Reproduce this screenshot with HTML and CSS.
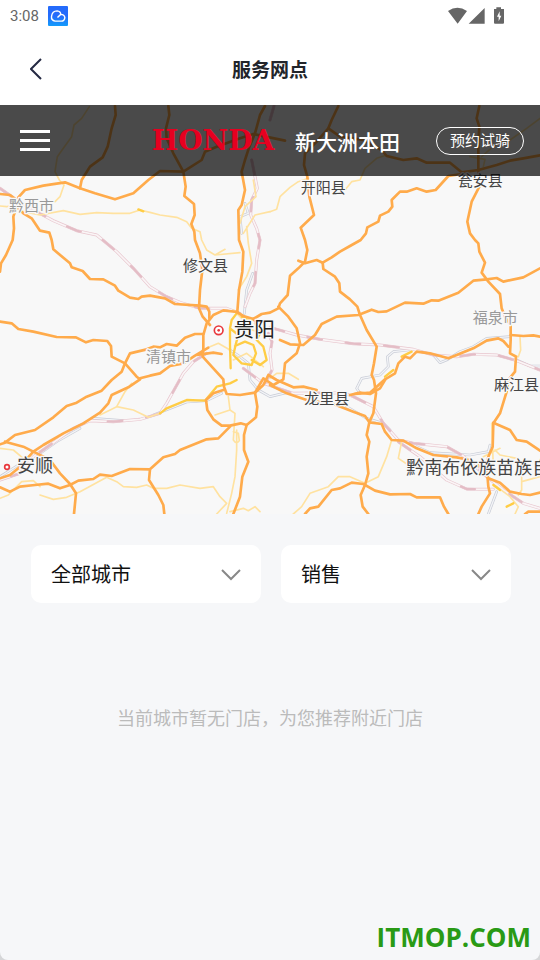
FILE: index.html
```html
<!DOCTYPE html>
<html lang="zh-CN">
<head>
<meta charset="utf-8">
<meta name="viewport" content="width=device-width, initial-scale=1">
<title>服务网点</title>
<link rel="stylesheet" href="styles.css">
</head>
<body>
<div class="status-bar">
  <span class="clock">3:08</span>
  <svg class="app-badge" viewBox="0 0 57 57" aria-hidden="true">
    <defs><linearGradient id="badge" x1="0" y1="0" x2="0" y2="1"><stop offset=".5" stop-color="#246bfb"/><stop offset="1" stop-color="#139cfb"/></linearGradient></defs>
    <rect width="57" height="57" rx="3" fill="url(#badge)"/>
    <path d="M27 33L36 24Q47 24 48 33Q47 43 38 43H20Q9 41 10 30Q12 14 26 14Q36 15 37 25" fill="none" stroke="#fff" stroke-width="4"/>
  </svg>
  <svg class="signals" viewBox="0 0 168 54" aria-hidden="true">
    <path d="M0 12Q28-8 57 12L29 50ZM62 50L110 3V50Z" fill="#666"/>
    <path d="M138 6H145V1H159V6H168V47Q168 50 165 50H141Q138 50 138 47Z" fill="#666"/>
    <path d="M155 13L147 29H152V43L160 26H155Z" fill="#fff"/>
  </svg>
</div>
<header class="title-bar">
  <button class="back" type="button" aria-label="返回">
    <svg viewBox="0 0 12 22" aria-hidden="true"><path d="M11 1L1 11L11 21" fill="none" stroke="#252a43" stroke-width="2"/></svg>
  </button>
  <h1>服务网点</h1>
</header>
<main>
  <section class="map-area">
    <svg class="map" viewBox="0 315 1620 1227" preserveAspectRatio="xMidYMid slice" role="img" aria-label="贵阳地图">
      <defs>
        <g id="rails">
          <path d="M0 565L50 600L100 630L160 662L230 692L290 705L350 755L400 805L450 860L500 890L540 907L600 925L680 925L720 940"/>
          <path d="M822 318L810 360M755 480L765 530L772 565L755 600L752 645L770 685L780 720L770 780L765 850L750 880L735 920"/>
          <path d="M810 982L890 1005L960 1018L1060 1031L1140 1035L1240 1048L1300 1065L1370 1070L1420 1063L1490 1065L1550 1082L1620 1110"/>
          <path d="M620 1060L580 1085L550 1120L500 1210L480 1240L420 1258L340 1265L270 1262L220 1285L150 1335L100 1370L60 1420L0 1440"/>
          <path d="M730 1105L790 1150L880 1180L1030 1178L1060 1190L1120 1220L1150 1270L1195 1320L1240 1330L1340 1340L1390 1368L1460 1430L1510 1470L1570 1510L1620 1525"/>
          <path d="M1195 1325L1260 1370L1340 1440L1400 1467L1480 1468"/>
          <path d="M805 1000L816 1025L810 1060L816 1110L795 1150"/>
        </g>
        <g id="rivers">
          <path d="M735 610L745 640L720 650L725 700M758 820L740 870L733 940"/>
          <path d="M690 1050L720 1070L745 1090L750 1140L775 1170L810 1190L860 1178"/>
          <path d="M1225 1050L1180 1055L1162 1070L1165 1100L1140 1125L1085 1135L1070 1165L1080 1180"/>
          <path d="M1300 1065L1320 1088L1340 1080L1380 1055L1420 1040L1460 1015L1530 1010M1550 1080L1590 1098L1620 1098"/>
          <path d="M0 1430L55 1395M120 1360L170 1325L240 1285M280 1255L370 1262M460 1245L560 1206L620 1202L665 1180"/>
          <path d="M1040 1220L1100 1255L1150 1270L1170 1290M1250 1340L1290 1358L1410 1365L1465 1355L1470 1335M1490 1475L1465 1542"/>
        </g>
      </defs>
      <rect y="315" width="1620" height="1227" fill="#f8f8f8"/>
      <use href="#rivers" class="river-edge"/><use href="#rivers" class="river-fill"/>
      <use href="#rails" class="rail-edge"/><use href="#rails" class="rail-fill"/><use href="#rails" class="rail-dash"/>
      <g class="minor">
        <path d="M268 320L245 355L222 375L215 410L190 445L172 470L165 515L178 540L192 555L180 590L165 605M0 618L20 620L50 610M70 635L120 645L190 632L240 643L290 638L340 640L390 640L420 630L450 637L480 645L530 652L560 665L575 685L600 695L605 720L620 750L645 765L720 758M645 765L675 748"/>
        <path d="M810 635L765 645L730 700M760 540L768 590L735 620L720 670M740 680L745 730L755 790L740 830L715 870"/>
        <path d="M810 635L830 628L840 590L870 562L895 545L925 535M1035 570L1055 545L1080 540L1095 505L1130 475L1160 465M1620 355L1580 385L1530 420L1490 430L1445 470M1410 470L1455 478L1450 500"/>
        <path d="M0 1345L40 1350L70 1375M0 1495L25 1485L65 1445L100 1442L120 1460M120 1485L160 1498L200 1492L240 1475L320 1432L350 1445L370 1460L410 1462L440 1455L460 1465L500 1465L540 1455L600 1465L640 1460L660 1490L680 1510L650 1542"/>
        <path d="M300 1245L350 1220L400 1230L445 1252L480 1240M350 1220L375 1175L395 1150M685 1190L690 1230L645 1245M690 1230L705 1240L700 1320Q710 1335 718 1322L715 1300L700 1295M710 1290L710 1350L705 1430L695 1480L680 1540M690 1535L730 1525L745 1532L765 1520L780 1535"/>
        <path d="M810 1135L830 1120L865 1120L895 1138M1560 1010L1562 1050L1555 1070L1530 1060M1175 1320L1160 1370L1135 1430L1095 1450L1050 1430L1015 1430L985 1460L930 1480L905 1520L880 1542M1205 1325L1195 1375L1225 1395"/>
        <path d="M1485 1350L1500 1365L1550 1375L1565 1400L1565 1470L1555 1485M1565 1445L1620 1430M1475 1270L1480 1400M1490 1460L1530 1490L1555 1520L1545 1542M1450 1370L1500 1345"/>
        <path d="M700 930L725 955L740 985L790 1000M630 1040L655 1030L690 1050M700 1080L740 1060L790 1100"/>
      </g>
      <g class="gold">
        <path d="M710 940L695 960L690 985L690 1035L692 1105M690 985L715 1005L708 1030L700 1065L725 1090L755 1095L768 1060L760 1035L735 1025L705 1038M765 970L780 1000L770 1020L790 1040L800 1080L780 1095L755 1080M725 950L745 960L765 955"/>
        <path d="M480 1240L500 1225L560 1200L615 1202L650 1160L690 1150L710 1140M1155 1130L1180 1110M1205 1070L1235 1055M1480 1455L1500 1470M1520 1520L1540 1510M415 628L430 634"/>
      </g>
      <g class="major">
        <path d="M345 318L347 345L335 385L323 440L308 472L270 500L245 540L240 565"/>
        <path d="M505 318L508 345L498 385L500 415L520 460L550 515L557 560L553 588L582 612L584 645L574 672L583 695L585 720L600 760L607 810L600 870L597 925L608 950L630 975"/>
        <path d="M795 318L780 345L765 400L748 440L735 480L725 515L735 570L725 615L715 630L717 720L730 755L727 815L717 870L712 935"/>
        <path d="M855 422L760 402L720 415L650 440L615 455L605 480L550 515L480 513L445 540L400 580L345 598L320 590L285 580L240 565L195 547L130 557L75 570L55 592L50 620L40 650L42 685L38 720L18 765L3 790L0 815"/>
        <path d="M0 582L30 585L50 600M55 625L70 640L95 655L120 692L148 698L155 720L160 748L210 790L215 802L248 813L270 837L310 838L345 857L355 872L390 893L415 897L425 890L450 887L495 895L525 912L600 917L620 920L628 935L628 955"/>
        <path d="M1015 318L995 360L985 385L950 425L915 460L912 495L922 530L928 590L942 645L902 683L915 720L922 750L915 785L895 805L870 827L863 885L840 910L835 925L810 938L785 942L760 957"/>
        <path d="M985 385L1020 410L1090 420L1145 450L1160 468L1210 480L1250 475L1280 488L1350 488L1385 517L1435 510L1490 495L1530 482L1570 475L1620 466"/>
        <path d="M1438 318L1430 355L1438 380L1435 430L1435 510L1438 560L1415 605L1402 665L1410 700L1425 720L1435 730L1438 755L1455 788L1445 818L1465 845L1500 882L1505 925L1515 950L1532 975L1532 1020L1530 1060L1548 1070L1545 1115L1525 1140L1520 1175L1500 1240L1480 1270L1478 1340L1465 1370L1460 1400L1465 1460L1470 1480L1445 1520L1435 1542"/>
        <path d="M1385 522L1345 528L1307 570L1280 575L1250 565L1220 575L1200 575L1175 600L1177 620L1165 635L1140 647L1135 665L1102 682L1098 700L1082 720L1050 738L1020 755L995 772L968 788L950 780L915 790L895 782"/>
        <path d="M968 788L970 807L1005 830L1018 850L1020 875L1050 898L1072 920L1080 945L1100 990L1130 1040L1122 1090L1115 1125L1122 1140L1128 1180L1120 1240L1108 1267L1100 1305L1108 1325L1100 1370L1105 1420L1095 1455L1082 1485L1088 1520L1105 1542"/>
        <path d="M835 920L865 950L890 985L900 1030L890 1060L855 1090L850 1138L820 1155L790 1135L765 1178"/>
        <path d="M840 1020L870 1033L910 1035L945 1005L965 972L1010 950L1075 945L1115 929L1135 936L1160 934L1215 908L1270 911L1295 901L1315 902L1375 878L1420 842L1460 838L1490 834L1510 845L1570 832L1620 805"/>
        <path d="M1532 1005L1570 1008L1600 1006L1620 1010M1065 1182L1110 1178L1155 1138L1185 1120L1195 1090L1215 1070L1230 1075L1250 1055L1290 1060L1345 1075L1370 1065L1420 1045L1460 1022L1495 1015L1510 1023L1525 1040"/>
        <path d="M0 965L35 970L55 987L100 995L170 1011L228 1012L258 1027L280 1020L322 1023L333 1038L335 1070L375 1090L410 1130L420 1138L385 1162L335 1185L325 1210L300 1238L250 1270L190 1300L130 1335L100 1355L55 1405L30 1425L0 1435"/>
        <path d="M420 1135L450 1127L480 1120L510 1098L550 1090L585 1067L625 1043M590 1065L640 1058L665 1062"/>
        <path d="M610 1002L585 1002L555 1013L530 1037L500 1032L480 1042L460 1040L440 1048L390 1060L375 1090L365 1115L335 1140L305 1172L260 1190L230 1208L200 1218L160 1252L105 1290L45 1305L15 1328L0 1333"/>
        <path d="M712 936L670 931L640 945L620 970L610 1005L610 1045L608 1070L640 1105L670 1138L672 1160L680 1182L720 1185L765 1178L772 1220L768 1252L740 1275L722 1270L690 1277L665 1277L640 1258L622 1230L618 1200L640 1180L670 1170"/>
        <path d="M710 936L730 948L760 957L775 975M765 1178L790 1155L805 1125L830 1140L880 1162L910 1160L950 1170M810 1155L860 1180L920 1200L1000 1212L1060 1235L1095 1248L1108 1267L1145 1272L1155 1295L1175 1320L1210 1322L1250 1345L1300 1365L1370 1372L1410 1380L1440 1400L1465 1435L1500 1448L1530 1475L1565 1482L1590 1485L1620 1478"/>
        <path d="M15 1325L70 1340L100 1355L150 1380L180 1420L210 1452L228 1480L222 1542"/>
        <path d="M0 1462L30 1475L60 1460L105 1455L145 1451L180 1465L210 1455L235 1442L280 1437L300 1424L335 1428L390 1407L450 1408L490 1372L525 1362L540 1350L620 1318L655 1315L690 1280M450 1408L447 1440L475 1485L490 1515L493 1542M740 1275L732 1305L732 1350L745 1385L727 1430L720 1490L700 1542"/>
        <path d="M915 1542L930 1525L955 1520L995 1470L1020 1465L1055 1448L1090 1452L1125 1472L1170 1483L1230 1482L1250 1492L1320 1492L1332 1520L1345 1542M1155 1140L1140 1165L1110 1182L1080 1178L1050 1185M1480 1268L1530 1290L1550 1320L1580 1325L1620 1352M1575 1542L1585 1535L1620 1535"/>
      </g>
      <g class="pins"><circle cx="656" cy="991" r="13"/><circle class="pin-dot" cx="656" cy="991" r="4"/><circle cx="21" cy="1401" r="7"/></g>
      <g class="labels">
        <text class="faint" x="27" y="632">黔西市</text>
        <text x="902" y="580">开阳县</text>
        <text x="1373" y="558">瓮安县</text>
        <text x="549" y="812">修文县</text>
        <text class="faint" x="1418" y="968">福泉市</text>
        <text class="faint" x="438" y="1087">清镇市</text>
        <text class="city" x="701" y="1012">贵阳</text>
        <text x="913" y="1211">龙里县</text>
        <text x="1482" y="1171">麻江县</text>
        <text class="town" x="51" y="1415">安顺</text>
        <text class="town" x="1219" y="1423">黔南布依族苗族自</text>
      </g>
    </svg>
    <nav class="brand-bar">
      <button class="menu" type="button" aria-label="菜单"><span></span><span></span><span></span></button>
      <div class="brand"><span class="brand-en">HONDA</span><span class="brand-cn">新大洲本田</span></div>
      <a class="booking" href="#">预约试骑</a>
    </nav>
  </section>
  <form class="filters">
    <div class="field">
      <select aria-label="城市"><option>全部城市</option></select>
      <svg class="chevron" viewBox="0 0 20 12" aria-hidden="true"><path d="M1 1L10 10L19 1"/></svg>
    </div>
    <div class="field">
      <select aria-label="类型"><option>销售</option></select>
      <svg class="chevron" viewBox="0 0 20 12" aria-hidden="true"><path d="M1 1L10 10L19 1"/></svg>
    </div>
  </form>
  <p class="empty">当前城市暂无门店，为您推荐附近门店</p>
</main>
<footer>ITMOP.COM</footer>
</body>
</html>
```
FILE: styles.css
```css
* { box-sizing: border-box; }

html { background: #d5d6d8; }

body {
  margin: 0;
  min-height: 100vh;
  display: flex;
  flex-direction: column;
  background: #f6f7f9;
  border-radius: 0 0 8px 8px;
  overflow-x: hidden;
  font-family: "Noto Sans CJK SC", sans-serif;
}

button { padding: 0; border: 0; background: none; }

.status-bar {
  display: flex;
  align-items: center;
  height: 32px;
  padding: 0 36px 0 10px;
  background: #fff;
}

.clock { font: 15px/20px Roboto, sans-serif; color: #666; width: 38px; }
.app-badge { width: 20px; height: 20px; }
.signals { width: 56px; height: 18px; margin-left: auto; }

.title-bar {
  display: grid;
  grid-template-columns: 44px 1fr 44px;
  align-items: center;
  height: 73px;
  padding: 0 14px;
  background: #fff;
}

.back { width: 44px; height: 44px; display: grid; place-items: center; }
.back svg { width: 12px; height: 22px; }

h1 {
  margin: 0;
  text-align: center;
  font-size: 19px;
  line-height: 28px;
  font-weight: 700;
  color: #22252b;
}

.map-area { position: relative; }
.map { display: block; width: 100%; height: auto; }
.map path { fill: none; stroke-linejoin: round; stroke-linecap: round; }
.major { stroke: #ffab4b; stroke-width: 8px; }
.minor { stroke: #ffe2a0; stroke-width: 5px; }
.gold { stroke: #ffcd45; stroke-width: 7px; }
.river-edge { stroke: #c8ccd6; stroke-width: 8px; }
.river-fill { stroke: #f3f4f7; stroke-width: 4px; }
.rail-edge { stroke: #e8c6ce; stroke-width: 9px; }
.rail-fill { stroke: #faf5f6; stroke-width: 5px; }
.rail-dash { stroke: #e4bdc6; stroke-width: 7px; stroke-dasharray: 44 72; }
.pins circle { fill: #fff; stroke: #e8383d; stroke-width: 5px; }
.pins .pin-dot { fill: #e8383d; stroke: none; }

.labels {
  font-size: 45px;
  fill: #444;
  stroke: #f8f8f8;
  stroke-width: 8px;
  stroke-linejoin: round;
  paint-order: stroke;
}
.labels .faint { fill: #999; }
.labels .town { font-size: 54px; }
.labels .city { font-size: 62px; fill: #222; }

.brand-bar {
  position: absolute;
  top: 0;
  left: 0;
  right: 0;
  height: 71px;
  padding: 0 16px 0 20px;
  display: flex;
  align-items: center;
  background: rgba(0, 0, 0, .7);
  color: #fff;
}

.menu { width: 30px; display: grid; gap: 6px; }
.menu span { height: 3px; background: #fff; }

.brand { display: flex; align-items: center; gap: 14px; margin: 0 36px 0 auto; white-space: nowrap; }
.brand-en {
  min-width: 136px;
  text-align: center;
  font: 700 28px/36px "DejaVu Serif", serif;
  color: #e60020;
}
.brand-cn { font-size: 21px; line-height: 36px; font-weight: 500; }

.booking {
  height: 28px;
  padding: 0 13px;
  border: 1px solid #fff;
  border-radius: 14px;
  font-size: 15px;
  line-height: 23px;
  color: #fff;
  text-decoration: none;
}

.filters {
  display: grid;
  grid-template-columns: 1fr 1fr;
  gap: 20px;
  padding: 31px 29px 0 31px;
}

.field { position: relative; }
.field select {
  display: block;
  width: 100%;
  height: 58px;
  padding: 0 48px 0 20px;
  border: 0;
  border-radius: 10px;
  appearance: none;
  background: #fff;
  color: #111;
  font: 20px/30px "Noto Sans CJK SC", sans-serif;
}
.chevron {
  position: absolute;
  right: 20px;
  top: 24px;
  width: 20px;
  height: 12px;
  pointer-events: none;
}
.chevron path { fill: none; stroke: #888; stroke-width: 2px; }

.empty {
  margin: 101px 0 0;
  text-align: center;
  font-size: 18px;
  line-height: 26px;
  color: #bbb;
}

footer {
  margin-top: auto;
  padding: 0 9px 6px;
  text-align: right;
  font: 700 26px/34px "Open Sans", sans-serif;
  color: #299a15;
}
```
